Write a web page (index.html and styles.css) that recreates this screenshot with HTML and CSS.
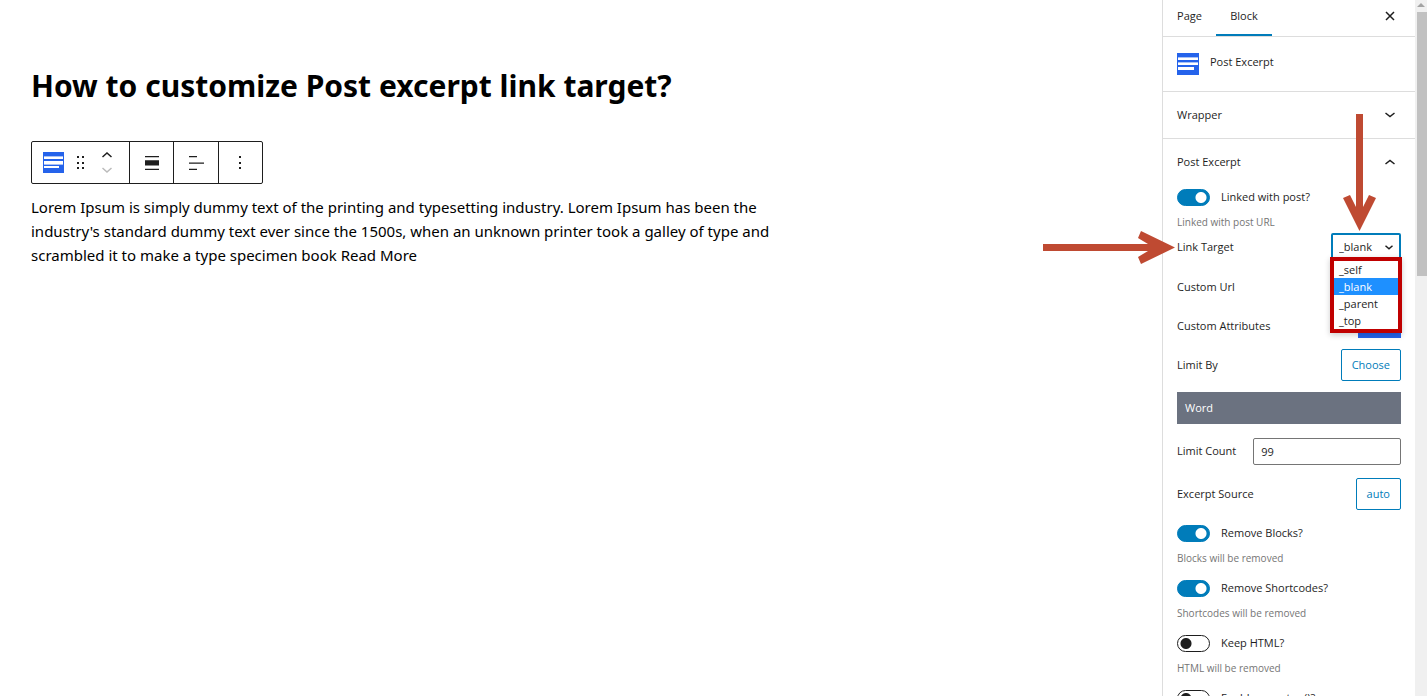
FILE: index.html
```html
<!DOCTYPE html>
<html lang="en">
<head>
<meta charset="utf-8">
<title>How to customize Post excerpt link target?</title>
<link rel="stylesheet" href="styles.css">
</head>
<body>
<div class="app">
  <main class="editor">
    <h1 class="title">How to customize Post excerpt link target?</h1>
    <div class="toolbar" role="toolbar" aria-label="Block tools">
      <div class="group group-main">
        <button class="tool tool-block" aria-label="Post Excerpt">
          <svg width="21" height="21" viewBox="0 0 21 21"><path fill="#2563eb" d="M0 0h21v21H0z"/><path fill="#a8c1f7" d="M1 4h19v1H1zM1 12h19v1H1z"/><path fill="#fff" d="M1 5h19v2H1zM1 9h19v3H1zM1 14h15v2H1z"/></svg>
        </button>
        <button class="tool tool-drag" aria-label="Drag">
          <svg width="8" height="14" viewBox="0 0 8 14" fill="#1e1e1e"><path d="M0 0h2v2H0zM5 0h2v2H5zM0 6h2v2H0zM5 6h2v2H5zM0 11h2v2H0zM5 11h2v2H5z"/></svg>
        </button>
        <div class="movers">
          <button class="tool" aria-label="Move up"><svg width="10" height="6" viewBox="0 0 10 6" fill="none" stroke="#1e1e1e" stroke-width="1.5"><path d="M.5 5 5 1l4.5 4"/></svg></button>
          <button class="tool" aria-label="Move down" disabled><svg width="10" height="6" viewBox="0 0 10 6" fill="none" stroke="#bbb" stroke-width="1.5"><path d="M.5 1 5 5l4.5-4"/></svg></button>
        </div>
      </div>
      <button class="group tool" aria-label="Align"><svg width="14" height="14" viewBox="0 0 14 14" fill="#1e1e1e"><path d="M0 0h14v1.300H0zM0 4.300h14v5.200H0zM0 12.700h14V14H0z"/></svg></button>
      <button class="group tool" aria-label="Align text"><svg width="16" height="14" viewBox="0 0 16 14" fill="#1e1e1e"><path d="M1 0h8v1.300H1zM1 6.400h15v1.300H1zM1 12.700h8V14H1z"/></svg></button>
      <button class="group tool" aria-label="Options"><svg width="2" height="14" viewBox="0 0 2 14" fill="#1e1e1e"><path d="M0 0h2v2H0zM0 6h2v2H0zM0 11h2v2H0z"/></svg></button>
    </div>
    <p class="excerpt">Lorem Ipsum is simply dummy text of the printing and typesetting industry. Lorem Ipsum has been the industry's standard dummy text ever since the 1500s, when an unknown printer took a galley of type and scrambled it to make a type specimen book Read More</p>
  </main>

  <aside class="sidebar">
    <div class="tabs">
      <button class="tab">Page</button>
      <button class="tab tab-active">Block</button>
      <button class="close" aria-label="Close"><svg width="10" height="10" viewBox="0 0 10 10" fill="none" stroke="#1e1e1e" stroke-width="1.5"><path d="m1 1 8 8M9 1 1 9"/></svg></button>
    </div>
    <div class="card">
      <svg width="22" height="22" viewBox="0 0 22 22"><path fill="#2563eb" d="M0 0h22v22H0z"/><path fill="#a8c1f7" d="M1 4h20v1H1zM1 9h20v1H1z"/><path fill="#fff" d="M1 5h20v2H1zM1 10h20v2H1zM1 14h16v3H1z"/></svg>
      <h2 class="card-name">Post Excerpt</h2>
    </div>
    <button class="panel-head panel-closed">Wrapper
      <svg width="10" height="6" viewBox="0 0 10 6" fill="none" stroke="#1e1e1e" stroke-width="1.5"><path d="M.5 1 5 4.600 9.500 1"/></svg>
    </button>
    <button class="panel-head">Post Excerpt
      <svg width="10" height="6" viewBox="0 0 10 6" fill="none" stroke="#1e1e1e" stroke-width="1.5"><path d="M.5 5 5 1.400 9.500 5"/></svg>
    </button>
    <div class="panel">
      <div class="toggle-row"><input class="toggle" type="checkbox" id="linked" checked><label for="linked">Linked with post?</label></div>
      <p class="help help-tight">Linked with post URL</p>
      <div class="row row-first">
        <label for="target">Link Target</label>
        <div class="picker">
          <select class="select" id="target"><option>_self</option><option selected>_blank</option><option>_parent</option><option>_top</option></select>
          <svg class="picker-mark" width="8" height="5" viewBox="0 0 8 5" fill="none" stroke="#1e1e1e" stroke-width="1.5"><path d="m.5.700 3.500 3 3.500-3"/></svg>
          <ul class="options">
            <li class="option">_self</li>
            <li class="option option-on">_blank</li>
            <li class="option">_parent</li>
            <li class="option">_top</li>
          </ul>
        </div>
      </div>
      <div class="row"><span>Custom Url</span></div>
      <div class="row"><span>Custom Attributes</span><button class="add" aria-label="Add attribute"></button></div>
      <div class="row"><span>Limit By</span><button class="btn">Choose</button></div>
      <div class="chosen">Word</div>
      <div class="row row-tall"><label for="count">Limit Count</label><input class="field" id="count" type="text" value="99"></div>
      <div class="row row-source"><span>Excerpt Source</span><button class="btn">auto</button></div>
      <div class="toggle-row"><input class="toggle" type="checkbox" id="blocks" checked><label for="blocks">Remove Blocks?</label></div>
      <p class="help">Blocks will be removed</p>
      <div class="toggle-row"><input class="toggle" type="checkbox" id="codes" checked><label for="codes">Remove Shortcodes?</label></div>
      <p class="help">Shortcodes will be removed</p>
      <div class="toggle-row"><input class="toggle" type="checkbox" id="html"><label for="html">Keep HTML?</label></div>
      <p class="help">HTML will be removed</p>
      <div class="toggle-row"><input class="toggle" type="checkbox" id="autop"><label for="autop">Enable wpautop()?</label></div>
    </div>
    <svg class="arrow arrow-right" width="132" height="37" viewBox="0 0 132 37" fill="#bf4a32"><path d="M0 15h105l-10-6 3-7 34 16.500L98 35l-3-7 10-6H0z"/></svg>
    <svg class="arrow arrow-down" width="37" height="118" viewBox="0 0 37 118" fill="#bf4a32"><path d="M15 0h7v93l6-12 7 3-16.500 33L2 84l7-3 6 12z"/></svg>
  </aside>
  <div class="scrollbar"><svg width="8" height="4" viewBox="0 0 8 4"><path fill="#a3a3a3" d="M4 0l4 4H0z"/></svg><div class="thumb"></div></div>
</div>
</body>
</html>
```
FILE: styles.css
```css
* { box-sizing: border-box; }
body {
  margin: 0;
  background: #fff;
  color: #1e1e1e;
  font: 11px/16px "Open Sans", "Noto Sans", sans-serif;
}
button { font: inherit; color: inherit; background: none; border: 0; padding: 0; }
svg { display: block; flex: none; }
h1, h2, p, ul { margin: 0; padding: 0; }

.app { display: flex; height: 100vh; overflow: hidden; }

.editor { flex: 1; padding: 64px 31px 0; color: #000; }
.title { font: 700 30px/44px "Noto Sans", "Open Sans", sans-serif; }
.toolbar {
  display: flex;
  width: 232px;
  height: 43px;
  margin-top: 33px;
  border: 1px solid #1e1e1e;
  border-radius: 2px;
}
.group { display: flex; flex: 1; align-items: center; justify-content: center; }
.group + .group { border-left: 1px solid #1e1e1e; }
.group-main { flex: none; width: 97px; gap: 13px; justify-content: flex-start; padding-left: 11px; }
.movers { display: grid; gap: 9px; margin-left: 4px; }
.excerpt { max-width: 752px; margin-top: 11px; font: 15px/24px "Noto Sans", "Open Sans", sans-serif; }

.sidebar { position: relative; flex: none; width: 253px; border-left: 1px solid #ddd; }
.tabs { display: flex; height: 37px; padding-right: 20px; border-bottom: 1px solid #ddd; font-weight: 500; }
.tab { width: 53px; padding-bottom: 4px; }
.tab-active { width: 56px; border-bottom: 2px solid #007cba; padding-bottom: 2px; }
.close { margin-left: auto; padding-bottom: 5px; }
.card { display: flex; gap: 11px; height: 55px; padding: 0 14px; align-items: center; border-bottom: 1px solid #ddd; }
.card-name { font-size: 11px; font-weight: 500; line-height: 16px; padding-bottom: 4px; }
.panel-head {
  display: flex;
  align-items: center;
  justify-content: space-between;
  width: 100%;
  height: 45px;
  padding: 0 20px 0 14px;
  font-weight: 500;
}
.panel-closed { height: 47px; border-bottom: 1px solid #ddd; }

.panel { padding: 0 14px; }
.toggle-row { display: flex; align-items: center; gap: 11px; height: 26px; }
.toggle {
  appearance: none;
  width: 33px;
  height: 17px;
  margin: 0;
  border: 1px solid #1e1e1e;
  border-radius: 9px;
  background: radial-gradient(circle at 8px 50%, #1e1e1e 5px, transparent 6px) #fff;
}
.toggle:checked {
  border-color: #007cba;
  background: radial-gradient(circle at 23px 50%, #fff 5px, transparent 6px) #007cba;
}
.help { height: 29px; padding-top: 4px; color: #757575; font-size: 10px; }
.help-tight { height: 20px; }
.row { display: flex; align-items: center; justify-content: space-between; height: 39px; }
.row-first { height: 34px; margin-bottom: 3px; }
.row-tall { height: 54px; gap: 17px; }
.row-source { height: 41px; margin-bottom: 1px; padding-bottom: 10px; }
.btn { height: 32px; padding: 0 10px; border: 1px solid #007cba; border-radius: 2px; color: #007cba; }
.add { width: 43px; height: 24px; background: #2563eb; }
.chosen { height: 32px; margin-top: 8px; padding: 8px; background: #6b7280; color: #fff; font-weight: 500; }
.field { flex: 1; min-width: 0; height: 27px; padding: 0 7px; border: 1px solid #757575; border-radius: 2px; font: inherit; color: inherit; }

.picker { position: relative; width: 70px; }
.select {
  appearance: none;
  display: block;
  width: 100%;
  height: 28px;
  padding: 0 6px;
  border: 2px solid #007cba;
  border-radius: 2px;
  background: #fff;
  color: inherit;
  font: inherit;
}
.picker-mark { position: absolute; right: 8px; top: 12px; }
.options {
  position: absolute;
  z-index: 1;
  top: 24px;
  left: -1px;
  width: 72px;
  border: 4px solid #c00000;
  background: #fff;
  box-shadow: 0 2px 6px rgb(0 0 0 / 20%);
  list-style: none;
}
.option { height: 17px; padding-left: 5px; line-height: 17px; }
.option-on { background: #1e90ff; color: #fff; }

.arrow { position: absolute; z-index: 2; }
.arrow-right { left: -120px; top: 229px; }
.arrow-down { left: 178px; top: 114px; }

.scrollbar { flex: none; width: 12px; padding-top: 3px; background: #f0f0f0; }
.scrollbar svg { margin: 0 auto 5px; }
.thumb { height: 264px; margin-left: 2px; background: #c1c1c1; }
```
